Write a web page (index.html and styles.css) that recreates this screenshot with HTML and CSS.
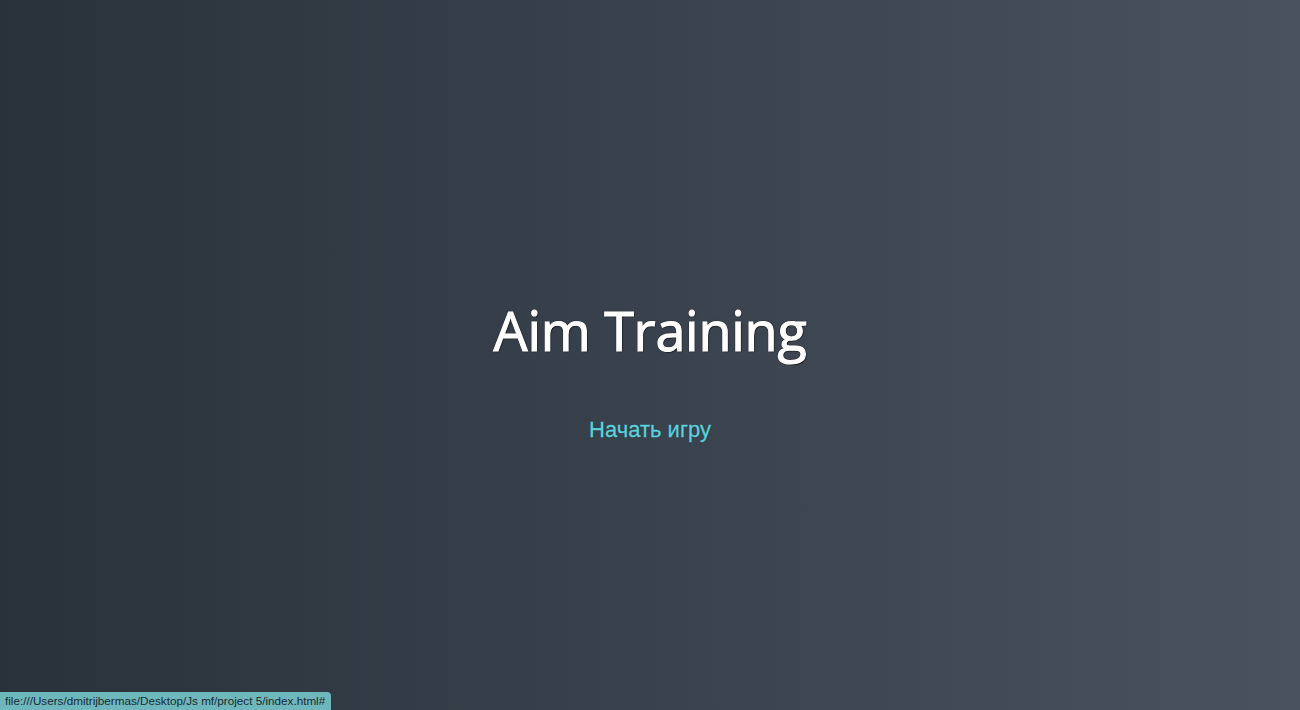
FILE: index.html
```html
<!DOCTYPE html>
<html lang="ru">
<head>
<meta charset="utf-8">
<title>Aim Training</title>
<link rel="stylesheet" href="styles.css">
</head>
<body>
<div class="screen">
  <h1 class="title">Aim Training</h1>
  <a href="#" class="start">Начать игру</a>
</div>
<div class="status">file:///Users/dmitrijbermas/Desktop/Js mf/project 5/index.html#</div>
</body>
</html>
```
FILE: styles.css
```css
html, body {
  margin: 0;
  padding: 0;
  height: 100%;
}
body {
  background: linear-gradient(90deg, #29313b 0%, #4a525e 100%);
  overflow: hidden;
}
.screen {
  height: 100%;
  box-sizing: border-box;
  padding-top: 30px;
  display: flex;
  flex-direction: column;
  align-items: center;
  justify-content: center;
}
.title {
  margin: 0 0 55px 0;
  font-family: "Open Sans", sans-serif;
  font-weight: 400;
  font-size: 54px;
  letter-spacing: -0.3px;
  line-height: 64px;
  color: #ffffff;
  -webkit-text-stroke: 1.1px #ffffff;
  text-shadow: 0 0 2px rgba(0, 0, 0, 0.9), 1px 1px 1px rgba(0, 0, 0, 0.6);
}
.start {
  font-family: "Liberation Sans", Arial, sans-serif;
  font-size: 22px;
  line-height: 25px;
  color: #5ad2dd;
  text-decoration: none;
  -webkit-text-stroke: 0.3px #5ad2dd;
  text-shadow: 0 0 1px rgba(0, 0, 0, 0.5);
}
.status {
  position: absolute;
  left: 0;
  bottom: 0;
  padding: 2px 6px 2px 5px;
  background: #6db7bd;
  color: #1c2a30;
  font-family: "Liberation Sans", Arial, sans-serif;
  font-size: 11.7px;
  line-height: 14px;
  border-top-right-radius: 4px;
}
```
